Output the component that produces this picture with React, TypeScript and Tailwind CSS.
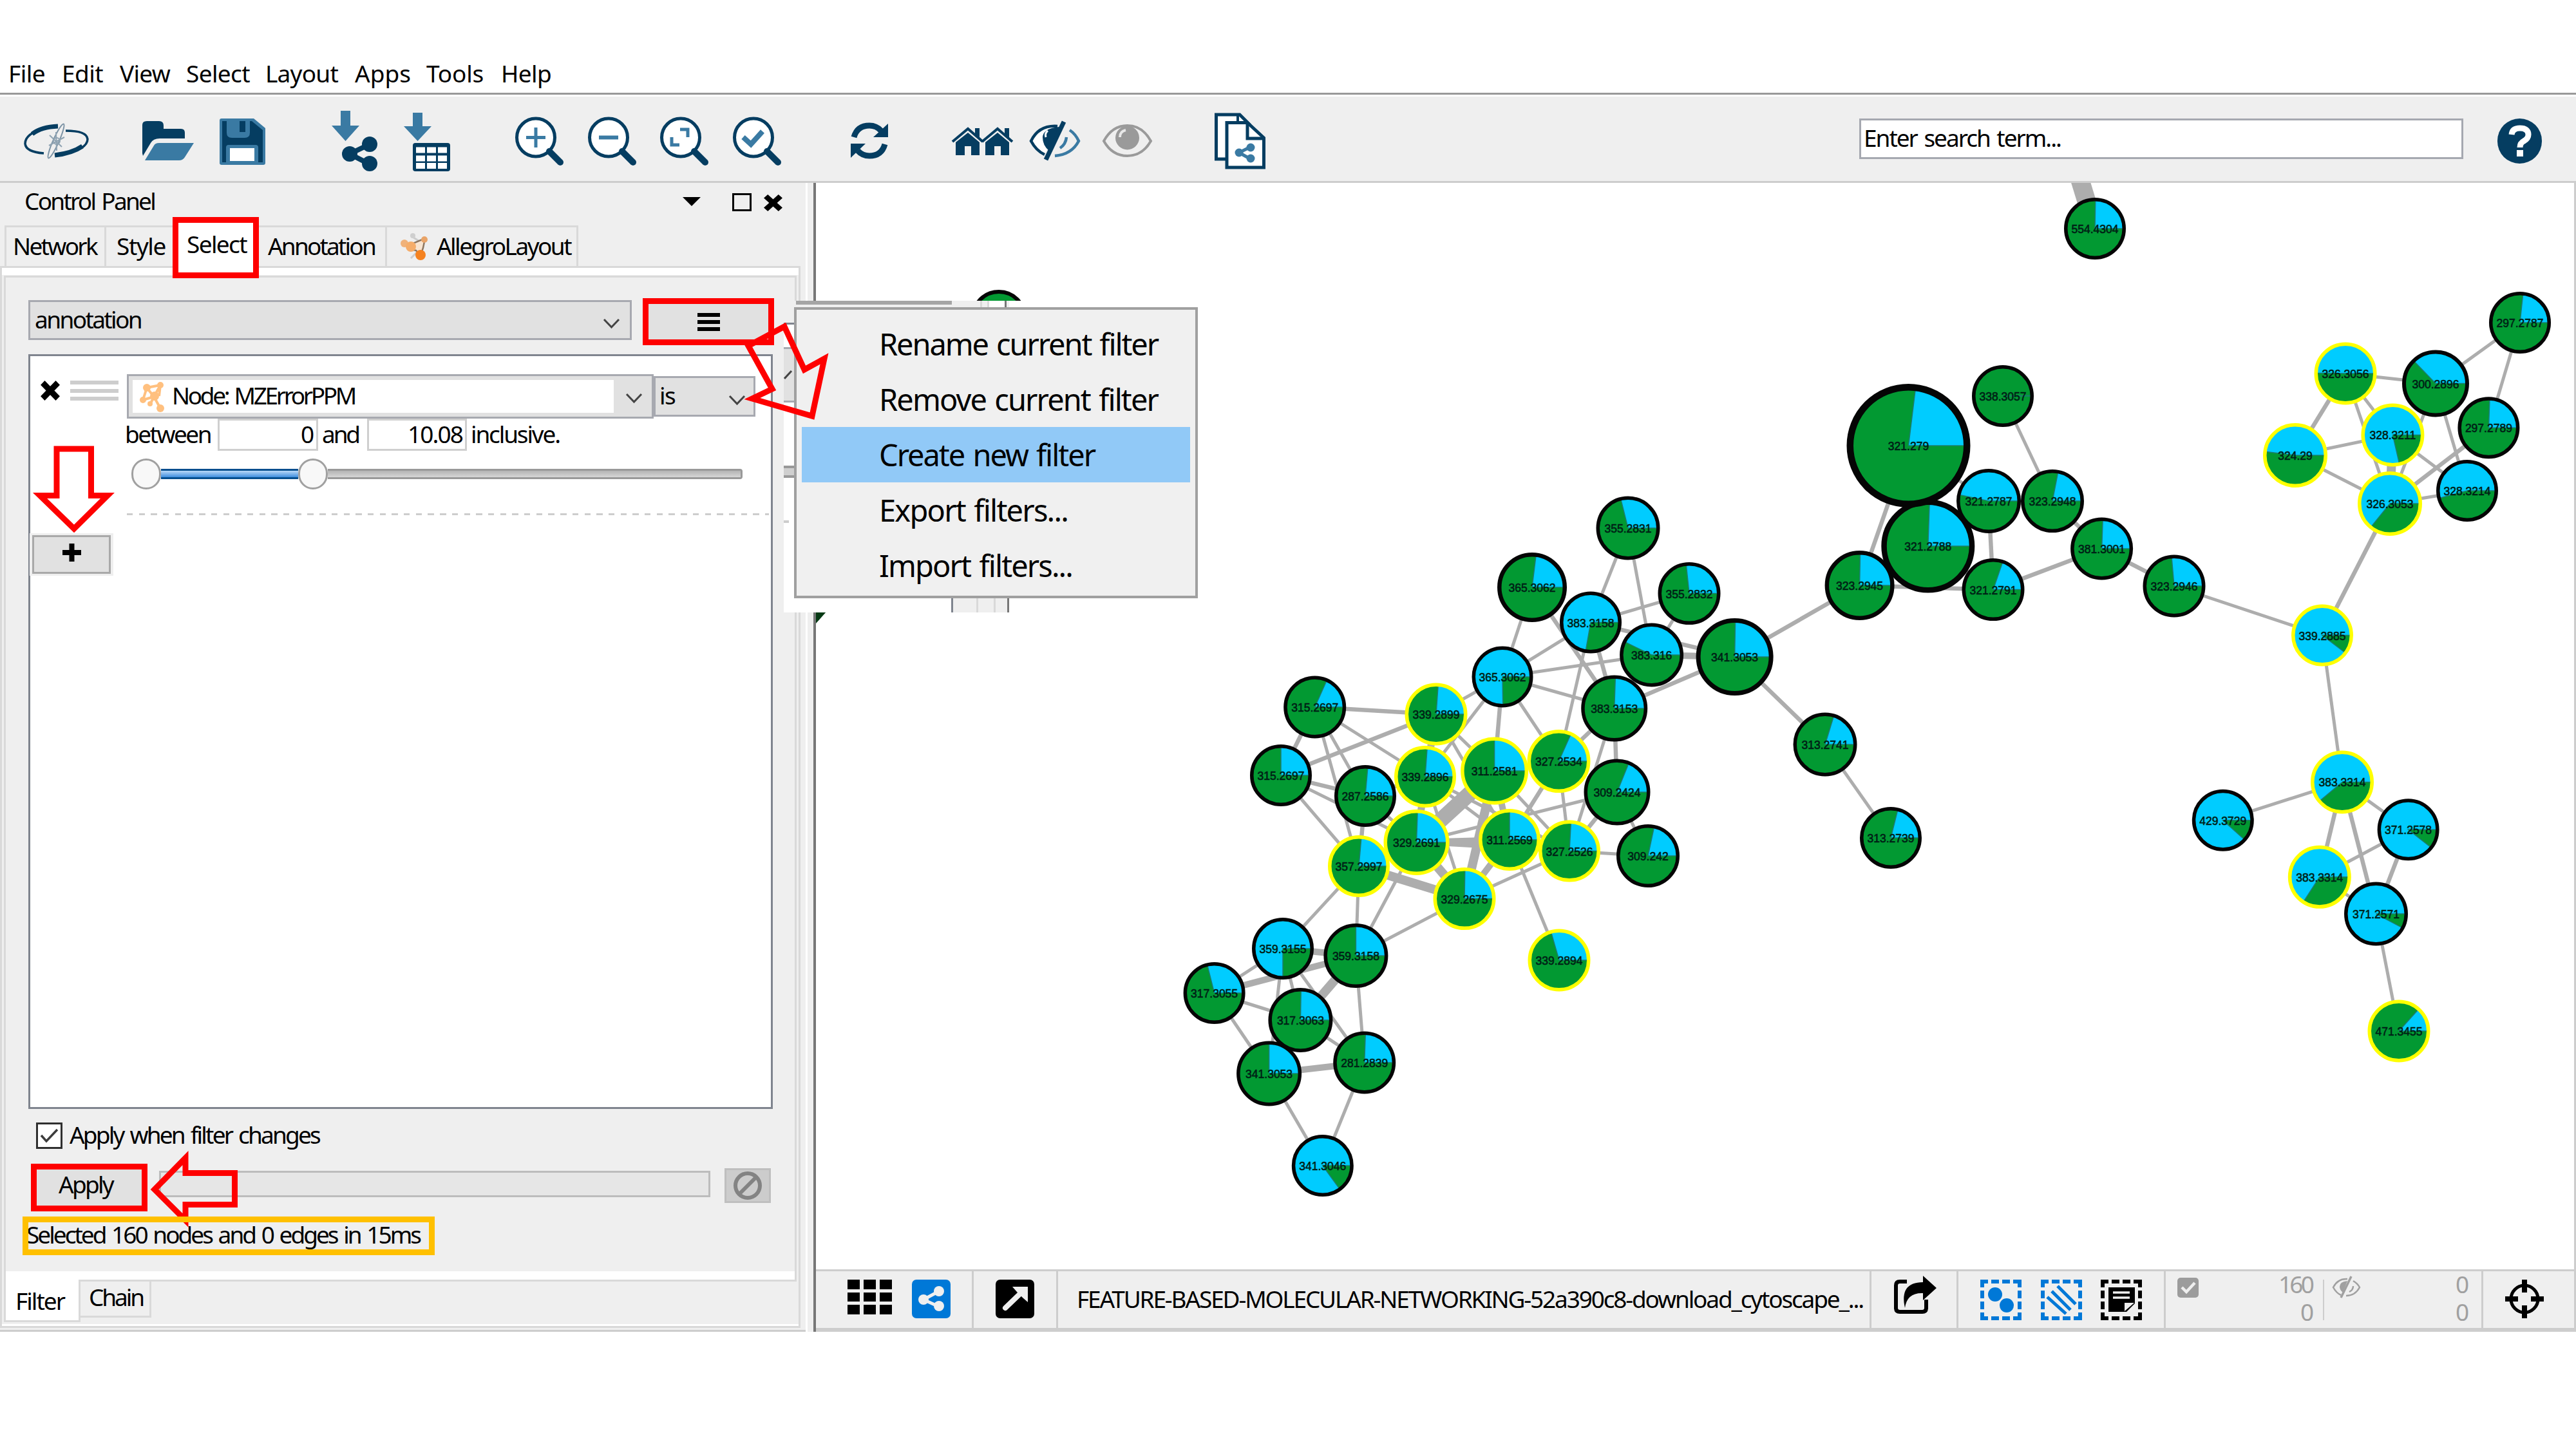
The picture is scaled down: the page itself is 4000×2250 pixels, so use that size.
import React, { useLayoutEffect, useRef, useState } from "react";

/** Single-line label whose tracking is adjusted so that it spans `w` pixels. */
function Label({ text, w, className = "", raised = true }: { text: string; w: number; className?: string; raised?: boolean }) {
  const ref = useRef<HTMLSpanElement>(null);
  const [spacing, setSpacing] = useState(0);
  useLayoutEffect(() => {
    if (!ref.current) return;
    const natural = ref.current.getBoundingClientRect().width - spacing * text.length;
    setSpacing((w - natural) / text.length);
  }, [text, w]);
  return (
    <span
      ref={ref}
      className={"inline-block shrink-0 whitespace-pre [word-spacing:3px] " + (raised ? "-translate-x-[2px] -translate-y-[2px] " : "") + className}
      style={{ letterSpacing: spacing }}
    >
      {text}
    </span>
  );
}

const NAVY = "#053d61";
const STEEL = "#3a7aa3";

/** Toolbar glyph: drawn in a window of the toolbar's own coordinate space. */
function Tool({ x, w, className = "", children }: { x: number; w: number; className?: string; children: React.ReactNode }) {
  return (
    <svg width={w} height={131} viewBox={`${x} 150 ${w} 131`} className={"shrink-0 overflow-visible " + className}>
      {children}
    </svg>
  );
}

function Lens({ className, children }: { className: string; children: React.ReactNode }) {
  return (
    <Tool x={0} w={75} className={className}>
      <circle cx="32" cy="213.500" r="29.500" fill="#fff" stroke={NAVY} strokeWidth="5" />
      <path d="M53 235 L70 252" stroke={NAVY} strokeWidth="10" strokeLinecap="round" />
      {children}
    </Tool>
  );
}

function Toolbar() {
  return (
    <div className="flex h-[134px] items-start border-b-[3px] border-[#cdcdcd] bg-[#efefef]">
      <Tool x={37} w={100} className="ml-[37px]">
        <g fill="none" stroke={NAVY}>
          <path d="M72 198 Q39 207 39 223 Q40 236 68 238" strokeWidth="3.500" />
          <path d="M50 208 Q64 197 90 196" strokeWidth="7" />
          <path d="M102 203 Q135 203 136 216 Q136 224 126 230" strokeWidth="3.500" />
          <path d="M85 241 Q112 238 128 227" strokeWidth="7" />
          <ellipse cx="87" cy="219" rx="29" ry="4.500" transform="rotate(-66 87 219)" strokeWidth="2" stroke="#7c93a5" />
          <path d="M77 210 L96 228 M76 226 L100 213 M87 205 L88 234" strokeWidth="2" stroke="#8fa3b2" />
          <circle cx="88" cy="219" r="5" strokeWidth="2" stroke="#8fa3b2" />
        </g>
      </Tool>
      <Tool x={221} w={80} className="ml-[84px]">
        <path d="M221 238 V194 Q221 188 228 188 H247 Q254 188 254 195 V200 H281 Q287 200 287 206 V215 H248 Q238 215 234 222 L222 242 Z" fill={NAVY} />
        <path d="M225 249 L239 226 Q241 222 247 222 H301 L287 244 Q284 249 278 249 Z" fill={STEEL} />
      </Tool>
      <Tool x={341} w={71} className="ml-[40px]">
        <path d="M344 184 H394 L412 199 V253 Q412 256 409 256 H344 Q341 256 341 253 V187 Q341 184 344 184 Z" fill={STEEL} />
        <path d="M345 188 H352 V206 Q352 214 360 214 H380 Q388 214 388 206 V188 L391 188 L408 202 V252 H401 V229 Q401 225 397 225 H355 Q351 225 351 229 V252 H345 Z" fill={NAVY} />
        <rect x="372" y="188" width="9" height="17" fill={NAVY} />
        <rect x="357" y="230" width="38" height="20" fill="#fff" />
      </Tool>
      <Tool x={515} w={71} className="ml-[103px]">
        <path d="M529 172 H544 V195 H558 L536.500 219 L515 195 H529 Z" fill={STEEL} />
        <path d="M543 239 L574 224 M543 239 L574 255" stroke={NAVY} strokeWidth="8" />
        <circle cx="543" cy="239" r="12" fill={NAVY} />
        <circle cx="574" cy="224" r="12" fill={NAVY} />
        <circle cx="574" cy="254" r="12" fill={NAVY} />
      </Tool>
      <Tool x={627} w={72} className="ml-[41px]">
        <path d="M641 175 H656 V196 H670 L648.500 219 L627 196 H641 Z" fill={STEEL} />
        <rect x="641" y="222" width="58" height="44" rx="4" fill={NAVY} />
        {[228.5, 241.5, 253].map((y) =>
          [646, 663, 680].map((x) => <rect key={`${x}-${y}`} x={x} y={y} width="14" height="9" fill="#fff" />)
        )}
      </Tool>
      <Lens className="ml-[101px]">
        <path d="M17 213.500 H47 M32 198 V229" stroke={STEEL} strokeWidth="5" />
      </Lens>
      <Lens className="ml-[38px]">
        <path d="M17 213.500 H47" stroke={STEEL} strokeWidth="6" />
      </Lens>
      <Lens className="ml-[37px]">
        <path d="M31 201 H43 V213 M18 213 V225 H30" stroke={STEEL} strokeWidth="5" fill="none" />
      </Lens>
      <Lens className="ml-[38px]">
        <path d="M16 213 L28 224 L46 204" stroke={STEEL} strokeWidth="8" fill="none" />
      </Lens>
      <Tool x={1321} w={58} className="ml-[108px]">
        <path d="M1326 213 Q1331 195 1350 195 Q1361 195 1368 203" stroke={NAVY} strokeWidth="9" fill="none" />
        <path d="M1379 192 V213 H1356 Z" fill={NAVY} />
        <path d="M1374 224 Q1369 242 1350 242 Q1339 242 1332 234" stroke={NAVY} strokeWidth="9" fill="none" />
        <path d="M1321 245 V223 H1344 Z" fill={NAVY} />
      </Tool>
      <Tool x={1477} w={95} className="ml-[98px]">
        {[0, 46].map((dx) => (
          <g key={dx} transform={`translate(${dx} 0)`}>
            <path d="M1479 220 L1503 200 L1526 220" stroke={NAVY} strokeWidth="4" fill="none" />
            <path d="M1514 199 H1521 V214 L1514 208 Z" fill={NAVY} />
            <path d="M1484 221 L1503 206 L1521 221 V241 H1508 V227 H1498 V241 H1484 Z" fill={NAVY} />
          </g>
        ))}
      </Tool>
      <Tool x={1599} w={78} className="ml-[27px]">
        <path d="M1642 196 Q1613 194 1601 219 Q1609 234 1622 240" stroke={NAVY} strokeWidth="4.500" fill="#fff" />
        <path d="M1645 197 Q1620 199 1619 213 Q1619 226 1629 234 Z" fill={NAVY} />
        <path d="M1627 203 Q1622 207 1624 213" stroke="#fff" strokeWidth="3" fill="none" />
        <path d="M1652 189 L1624 248" stroke={NAVY} strokeWidth="7" />
        <path d="M1661 202 Q1670 208 1675 219 Q1664 240 1638 242 M1656 213 Q1655 224 1646 230" stroke={STEEL} strokeWidth="4.500" fill="none" />
      </Tool>
      <Tool x={1712} w={77} className="ml-[35px]">
        <path d="M1714 219 Q1727 195 1750.500 195 Q1774 195 1787 219 Q1774 242 1750.500 242 Q1727 242 1714 219 Z" stroke="#9a9a9a" strokeWidth="4" fill="#efefef" />
        <circle cx="1750.500" cy="214" r="18.500" fill="#9a9a9a" />
        <path d="M1739 213 Q1739 204 1748 202" stroke="#e8e8e8" strokeWidth="4" fill="none" />
      </Tool>
      <Tool x={1886} w={79} className="ml-[97px]">
        <path d="M1888.500 178 H1925 L1940 193 V247 H1888.500 Z" fill="#fff" stroke={NAVY} strokeWidth="5" />
        <path d="M1922 178 V190" stroke={NAVY} strokeWidth="4" />
        <path d="M1905 190.500 H1937 L1962.500 214 V260 H1905 Z" fill="#fff" stroke={NAVY} strokeWidth="5" />
        <path d="M1937 191 V215 H1962" fill="none" stroke={NAVY} strokeWidth="5" />
        <path d="M1924 237 L1942 228 M1924 237 L1942 247" stroke={STEEL} strokeWidth="5" />
        <circle cx="1924" cy="237" r="6.500" fill={STEEL} />
        <circle cx="1942" cy="229" r="6.500" fill={STEEL} />
        <circle cx="1942" cy="246" r="6.500" fill={STEEL} />
      </Tool>
      <div className="mt-[34px] ml-auto flex h-[63px] w-[938px] shrink-0 items-center border-[3px] border-[#a5a8b0] bg-white pl-[6px]">
        <Label text="Enter search term..." w={306} />
      </div>
      <div className="mt-[34px] mr-[53px] ml-[53px] flex h-[70px] w-[69px] shrink-0 items-center justify-center rounded-full bg-[#053d61]">
        <svg width="36" height="50" viewBox="0 0 36 50">
          <path d="M5 15 Q6 5 18 5 Q31 5 31 15 Q31 21 24 25 Q18 28 18 35" fill="none" stroke="#fff" strokeWidth="9" />
          <rect x="13" y="39" width="10" height="10" fill="#fff" />
        </svg>
      </div>
    </div>
  );
}

function Chevron({ className = "" }: { className?: string }) {
  return (
    <svg width="27" height="18" viewBox="0 0 27 18" className={"shrink-0 " + className}>
      <path d="M2 3 L13.500 15 L25 3" fill="none" stroke="#444" strokeWidth="3" />
    </svg>
  );
}

function Cross({ w, h }: { w: number; h: number }) {
  return (
    <svg width={w} height={h} viewBox="0 0 30 28" preserveAspectRatio="none" className="shrink-0">
      <path d="M4 3 L26 25 M26 3 L4 25" stroke="#000" strokeWidth="8.500" />
    </svg>
  );
}

function PanelTabs() {
  return (
    <div className="ml-[7px] flex h-[63px] items-stretch">
      <div className="flex w-[158px] shrink-0 items-center border-x-[3px] border-t-[3px] border-[#d9d9d9] pl-[12px]">
        <Label text="Network" w={130} />
      </div>
      <div className="flex w-[103px] shrink-0 items-center border-t-[3px] border-[#d9d9d9] pl-[18px]">
        <Label text="Style" w={76} />
      </div>
      <div className="relative z-10 -mt-[13px] flex h-[95px] w-[134px] shrink-0 border-[9px] border-[#fe0000] bg-white pt-[9px] pl-[15px]">
        <Label text="Select" w={93} className="leading-[52px]" />
      </div>
      <div className="flex w-[199px] shrink-0 items-center border-t-[3px] border-r-[3px] border-[#d9d9d9] pl-[16px]">
        <Label text="Annotation" w={166} />
      </div>
      <div className="flex w-[297px] shrink-0 items-center border-t-[3px] border-r-[3px] border-[#d9d9d9] pl-[21px]">
        <svg width="44" height="44" viewBox="0 0 44 44" className="shrink-0">
          <path d="M17 6 L30 14 M30 14 L40 8 M26 30 L16 40" stroke="#ccc" strokeWidth="3" />
          <circle cx="19" cy="5" r="4" fill="#cfcfcf" />
          <path d="M4 16 L17 18 L38 9 L35 24 L31 36 L24 28 L14 26 Z" fill="#f8e4d0" stroke="#8d7660" strokeWidth="2.500" />
          <circle cx="6" cy="17" r="6" fill="#f0b27a" />
          <circle cx="16" cy="22" r="8" fill="#f5ad6a" />
          <circle cx="37" cy="11" r="5" fill="#e9a468" />
          <circle cx="31" cy="35" r="8" fill="#f58220" />
        </svg>
        <Label text="AllegroLayout" w={208} className="ml-[14px]" />
      </div>
    </div>
  );
}

function FilterRow() {
  return (
    <div className="flex flex-col">
      <div className="mt-[28px] flex h-[69px] items-start">
        <div className="mt-[10px] ml-[15px]">
          <Cross w={32} h={31} />
        </div>
        <div className="mt-[10px] ml-[15px] flex h-[31px] w-[75px] shrink-0 flex-col justify-between">
          <div className="h-[6px] bg-[#cdcdcd]" />
          <div className="h-[6px] bg-[#cdcdcd]" />
          <div className="h-[6px] bg-[#cdcdcd]" />
        </div>
        <div className="ml-[13px] flex h-[69px] w-[818px] shrink-0 items-center border-[3px] border-[#a7a9b0] bg-[#e1e1e1] pl-[6px]">
          <div className="flex h-[51px] w-[747px] shrink-0 items-center bg-white pl-[11px]">
            <svg width="39" height="48" viewBox="0 0 39 48" className="shrink-0">
              <g stroke="#ffc07f" strokeWidth="4">
                <path d="M11 10 L32 6 M11 10 L5 29 M32 6 L22 24 M5 29 L22 24 M11 10 L22 24 M22 24 L32 42 M32 6 L30 23 M22 24 L16 36" />
              </g>
              <g fill="#ffc07f">
                <circle cx="11" cy="10" r="6" />
                <circle cx="32" cy="6" r="5" />
                <circle cx="5" cy="29" r="5" />
                <circle cx="23" cy="23" r="7" />
                <circle cx="32" cy="42" r="6" />
                <circle cx="16" cy="35" r="4" />
              </g>
            </svg>
            <Label text="Node: MZErrorPPM" w={284} className="ml-[13px]" />
          </div>
          <Chevron className="mt-[4px] ml-[18px]" />
        </div>
        <div className="mt-[3px] flex h-[63px] w-[158px] shrink-0 items-center border-[3px] border-[#a7a9b0] bg-[#e1e1e1] pl-[8px]">
          <Label text="is" w={24} />
          <Chevron className="mt-[10px] ml-[81px]" />
        </div>
      </div>
      <div className="ml-[149px] flex h-[50px] items-center">
        <Label text="between" w={133} />
        <div className="ml-[9px] flex h-[50px] w-[156px] shrink-0 items-center justify-end border-[3px] border-[#cfcfcf] pr-[2px]">
          <Label text="0" w={20} />
        </div>
        <Label text="and" w={57} className="ml-[8px]" />
        <div className="ml-[11px] flex h-[50px] w-[155px] shrink-0 items-center justify-end border-[3px] border-[#cfcfcf] pr-[2px]">
          <Label text="10.08" w={85} />
        </div>
        <Label text="inclusive." w={138} className="ml-[8px]" />
      </div>
      <div className="mt-[12px] ml-[157px] flex h-[48px] items-center">
        <div className="h-[48px] w-[46px] shrink-0 rounded-full border-[3px] border-[#a0a0a0] bg-[#f8f8f8]" />
        <div className="h-[16px] w-[213px] shrink-0 border-y-[3px] border-[#064f8f] bg-linear-to-b from-[#b9d9f7] to-[#3b8ede]" />
        <div className="h-[48px] w-[46px] shrink-0 rounded-full border-[3px] border-[#a0a0a0] bg-[#f8f8f8]" />
        <div className="h-[16px] w-[644px] shrink-0 rounded-r-[4px] border-y-[3px] border-r-[3px] border-[#999] bg-linear-to-b from-[#b4b4b4] to-[#d6d6d6]" />
      </div>
      <div className="mt-[37px] ml-[150px] h-[3px] w-[997px] bg-[repeating-linear-gradient(90deg,#cdcdcd_0px,#cdcdcd_9.400px,transparent_9.400px,transparent_18.700px)]" />
      <div className="mt-[28px] -ml-px flex h-[66px] w-[130px] items-center justify-center bg-[#efefef]">
        <div className="flex h-[60px] w-[122px] items-center justify-center border-[3px] border-[#a9a9a9] bg-[#e1e1e1]">
          <svg width="29" height="28" viewBox="0 0 29 28" className="-mt-[6px]">
            <path d="M0 14 H29 M14.500 0 V28" stroke="#000" strokeWidth="8" />
          </svg>
        </div>
      </div>
    </div>
  );
}

function ControlPanel() {
  return (
    <div className="flex h-[1781px] w-[1251px] shrink-0 flex-col bg-[#efefef]">
      <div className="flex h-[66px] shrink-0 items-center pr-[35px] pl-[40px]">
        <Label text="Control Panel" w={202} className="-mt-[8px]" />
        <svg width="28" height="14" viewBox="0 0 28 14" className="-mt-[8px] ml-auto">
          <path d="M0 0 H28 L14 14 Z" fill="#000" />
        </svg>
        <div className="-mt-[6px] ml-[49px] h-[28px] w-[30px] border-[3px] border-black" />
        <div className="-mt-[4px] ml-[18px]">
          <Cross w={31} h={26} />
        </div>
      </div>
      <PanelTabs />
      <div className="flex h-[1649px] w-[1243px] flex-col border-[3px] border-[#d9d9d9] bg-[#efefef]">
        <div className="h-[11px] shrink-0 bg-white" />
        <div className="mt-px ml-[3px] flex h-[1562px] w-[1231px] shrink-0 flex-col border-x-[3px] border-y-[3px] border-[#d9d9d9] pl-[35px]">
          <div className="mt-[32px] flex h-[73px] shrink-0 items-center">
            <div className="-mt-[5px] flex h-[62px] w-[937px] shrink-0 items-center border-[3px] border-[#a7a9b0] bg-[#e1e1e1] pr-[15px] pl-[9px]">
              <Label text="annotation" w={165} />
              <Chevron className="mt-[10px] ml-auto" />
            </div>
            <div className="ml-[17px] flex h-[73px] w-[204px] shrink-0 flex-col items-center justify-center gap-[5px] border-[9px] border-[#fe0000] bg-[#e1e1e1]">
              <div className="h-[6px] w-[35px] bg-black" />
              <div className="h-[6px] w-[35px] bg-black" />
              <div className="h-[6px] w-[35px] bg-black" />
            </div>
          </div>
          <div className="mt-[14px] h-[1172px] w-[1156px] shrink-0 border-[3px] border-[#7f848e] bg-white">
            <FilterRow />
          </div>
          <div className="mt-[21px] ml-[12px] flex h-[41px] shrink-0 items-center">
            <div className="flex h-[41px] w-[41px] shrink-0 items-center justify-center border-[3px] border-[#2f2f2f] bg-white">
              <svg width="31" height="29" viewBox="0 0 31 29">
                <path d="M3 14 L11 23 L28 5" fill="none" stroke="#3c3c3c" strokeWidth="3.500" />
              </svg>
            </div>
            <Label text="Apply when filter changes" w={388} className="ml-[13px]" />
          </div>
          <div className="mt-[23px] ml-[4px] flex h-[74px] shrink-0 items-center">
            <div className="flex h-[74px] w-[181px] shrink-0 items-center border-[9px] border-[#fe0000] bg-[#e1e1e1] pl-[36px]">
              <Label text="Apply" w={84} className="-mt-[8px]" />
            </div>
            <div className="-mt-[12px] ml-[18px] h-[41px] w-[856px] shrink-0 border-[3px] border-[#bcbcbc] bg-[#e6e6e6]" />
            <div className="-mt-[6px] ml-[22px] flex h-[54px] w-[72px] shrink-0 items-center justify-center border-[3px] border-[#bfbfbf] bg-[#cccccc]">
              <svg width="46" height="46" viewBox="0 0 46 46">
                <circle cx="23" cy="23" r="19" fill="none" stroke="#838383" strokeWidth="6" />
                <path d="M36 10 L10 36" stroke="#838383" strokeWidth="6" />
              </svg>
            </div>
          </div>
          <div className="mt-[7px] -ml-[9px] flex h-[60px] w-[640px] shrink-0 items-center">
            <Label text="Selected 160 nodes and 0 edges in 15ms" w={611} className="ml-[8px]" />
          </div>
          <div className="mt-auto -ml-[35px] h-[13px] shrink-0 bg-white" />
        </div>
        <div className="-mt-[3px] ml-[3px] flex h-[66px] shrink-0 items-start">
          <div className="flex h-[66px] w-[119px] shrink-0 items-center border-x-[3px] border-b-[3px] border-[#d9d9d9] bg-white pl-[17px]">
            <Label text="Filter" w={76} className="mt-[5px]" />
          </div>
          <div className="flex h-[59px] w-[110px] shrink-0 items-center border-y-[3px] border-r-[3px] border-[#d9d9d9] pl-[15px]">
            <Label text="Chain" w={84} className="-mt-[2px]" />
          </div>
        </div>
        <div className="mt-auto h-[3px] shrink-0 bg-white" />
      </div>
    </div>
  );
}

type GraphNode = { id: string; label: string; x: number; y: number; r: number; sweep: number; selected: boolean; ring: number };
const n = (id: string, label: string, x: number, y: number, r: number, sweep: number, selected = false, ring = 5.5): GraphNode => ({
  id,
  label,
  x,
  y,
  r,
  sweep,
  selected,
  ring,
});

/** id, label, centre, radius, cyan sweep in degrees, selected, ring width */
const NODES: GraphNode[] = [
  n("A", "355.2831", 2528, 820, 49.5, 104),
  n("B", "365.3062", 2379, 912, 54, 83, false, 6.5),
  n("D", "355.2832", 2623, 921.6, 48.5, 96),
  n("F", "341.3053", 2693.6, 1020, 60, 89, false, 7),
  n("C", "383.3158", 2470, 966.5, 48, 260),
  n("E", "383.316", 2564.6, 1017, 49.5, 154),
  n("G", "365.3062", 2333, 1051, 47.5, 271),
  n("H", "383.3153", 2506.7, 1100, 51.5, 88),
  n("I", "315.2697", 2041.7, 1098, 48.5, 66),
  n("K", "315.2697", 1989, 1204, 48, 90),
  n("L", "287.2586", 2120, 1236, 48, 85),
  n("J", "339.2899", 2230, 1109, 48.5, 86, true),
  n("M", "339.2896", 2213, 1206, 48, 86, true),
  n("N", "311.2581", 2320.6, 1197, 52.5, 90, true),
  n("P", "309.2424", 2511, 1230, 51.5, 68),
  n("O", "327.2534", 2420.5, 1182, 49, 66, true),
  n("Q", "309.242", 2559, 1329, 49, 78),
  n("T", "329.2691", 2199.5, 1308, 51, 88, true),
  n("R", "327.2526", 2437, 1321.6, 48, 87, true),
  n("S", "311.2569", 2344, 1304, 48, 90, true),
  n("U", "357.2997", 2110, 1345, 48, 85, true),
  n("V", "329.2675", 2274, 1395.6, 48.5, 89, true),
  n("W", "359.3155", 1992, 1473, 48, 270),
  n("X", "359.3158", 2105.4, 1484, 50, 90),
  n("Y", "339.2894", 2421, 1491, 48.5, 106, true),
  n("Z", "317.3055", 1885.6, 1542, 48, 104),
  n("b", "341.3053", 1970.6, 1667, 50.5, 90),
  n("a", "317.3063", 2019.4, 1584, 50, 89),
  n("c", "281.2839", 2118.7, 1650, 48.5, 88),
  n("d", "341.3046", 2053.8, 1810, 48, 306),
  n("e", "338.3057", 3110, 615, 48, 1),
  n("h", "321.2787", 3088, 778, 50, 168),
  n("i", "323.2948", 3187, 778, 49, 79),
  n("k", "321.2791", 3095, 915.6, 48.5, 71),
  n("j", "323.2945", 2887.6, 909, 54, 89, false, 6.5),
  n("g", "321.2788", 2993.8, 848, 72.5, 88, false, 8.5),
  n("f", "321.279", 2963.5, 692, 96, 83, false, 10.5),
  n("l", "381.3001", 3263.6, 852, 48.5, 88),
  n("m", "323.2946", 3376, 910, 48.5, 95),
  n("o", "313.2741", 2834, 1156, 49.5, 73),
  n("p", "313.2739", 2936, 1301, 48, 76),
  n("q", "429.3729", 3451.8, 1273.7, 48, 318),
  n("r", "383.3314", 3637, 1214.4, 49, 220, true),
  n("s", "371.2578", 3739.6, 1288.3, 48, 322),
  n("t", "383.3314", 3601.8, 1361.8, 49, 237, true),
  n("u", "371.2571", 3689.5, 1419, 49.5, 332),
  n("v", "471.3455", 3725, 1601, 48.5, 48, true),
  n("w", "339.2885", 3606, 986.6, 48, 323, true),
  n("1", "328.3214", 3831, 762, 48, 195),
  n("3", "324.29", 3564, 707, 50, 173, true),
  n("4", "328.3211", 3715.4, 675.4, 49, 283, true),
  n("2", "326.3053", 3711, 782, 50, 231, true),
  n("5", "326.3056", 3642, 580, 48.5, 179, true),
  n("6", "300.2896", 3782, 595.5, 52, 134, false, 6),
  n("7", "297.2789", 3864.4, 664.3, 48, 88),
  n("8", "297.2787", 3913, 501, 48, 84),
  n("9", "554.4304", 3253, 355, 48, 89),
];

/** Pairs of node ids, grouped by line width. */
const EDGES: [number, string][] = [
  [5, "AC AE BG CD DE CG EG GH GJ GM GO CO HR OR PT PQ RQ RV SY VX TX UX UW IM IL IU KU KT LT ZW Zb Za aW bW cW cX ac bd cd JN JS MS MV NR NO MR fh ei op wm wr rq uv 56 54 52 34 32 62 61 68 78 41 21 rs ts tu"],
  [6.5, "BH CH CF IJ KJ KL IK HO OS PR FH Fo jF fj kj hk kl lm w2 rt ru su 53 72 gk il GN LU LM HP TR"],
  [10, "EF WX XZ bc MT JM ST SV NS JT"],
  [14, "aX UV NV TV 42 ab"],
  [24, "NT"],
];

function sector(x: number, y: number, r: number, a: number) {
  const rad = (a * Math.PI) / 180;
  const ex = x + r * Math.cos(rad);
  const ey = y - r * Math.sin(rad);
  return `M${x} ${y} L${x + r} ${y} A${r} ${r} 0 ${a > 180 ? 1 : 0} 0 ${ex} ${ey} Z`;
}

function NetworkView() {
  const byId = Object.fromEntries(NODES.map((v) => [v.id, v]));
  return (
    <svg width="2730" height="1687" viewBox="1267 284 2730 1687" className="block shrink-0 bg-white">
      <path d="M3227 270 L3250 345" stroke="#adadad" strokeWidth="29" />
      {EDGES.map(([w, list]) =>
        list.split(" ").map((p) => (
          <line key={p} x1={byId[p[0]].x} y1={byId[p[0]].y} x2={byId[p[1]].x} y2={byId[p[1]].y} stroke="#adadad" strokeWidth={w} />
        ))
      )}
      {NODES.map((v) => {
        const ri = v.r - v.ring / 2;
        return (
          <g key={v.id}>
            <circle cx={v.x} cy={v.y} r={ri} fill="#029932" />
            <path d={sector(v.x, v.y, ri, v.sweep)} fill="#00ccff" stroke="#1b7d70" strokeWidth="1.500" />
            <circle cx={v.x} cy={v.y} r={ri} fill="none" stroke={v.selected ? "#ffff00" : "#050505"} strokeWidth={v.ring} />
            <text
              x={v.x}
              y={v.y + 7}
              textAnchor="middle"
              fontSize="17.500"
              fill="#001f16"
              stroke="#001f16"
              strokeWidth="0.600"
              className="font-['Liberation_Sans',sans-serif]"
            >
              {v.label}
            </text>
          </g>
        );
      })}
      <circle cx="1551" cy="494" r="41" fill="#029932" stroke="#050505" strokeWidth="6" />
      <path d="M1267 950 H1283 L1267 968 Z" fill="#063a14" />
    </svg>
  );
}

function Marquee({ color, className = "", children }: { color: string; className?: string; children: React.ReactNode }) {
  return (
    <svg width="64" height="63" viewBox="0 0 64 63" className={"shrink-0 " + className}>
      <path
        d="M0 3 H12 M17 3 H29 M34 3 H46 M51 3 H64 M0 60 H12 M17 60 H29 M34 60 H46 M51 60 H64 M3 0 V12 M3 17 V29 M3 34 V46 M3 51 V63 M61 0 V12 M61 17 V29 M61 34 V46 M61 51 V63"
        stroke={color}
        strokeWidth="6"
      />
      {children}
    </svg>
  );
}

function StatusBar() {
  return (
    <div className="flex h-[97px] w-[2730px] shrink-0 border-t-[3px] border-b-[6px] border-[#cdcdcd] bg-[#efefef]">
      <div className="flex w-[245px] shrink-0 items-start border-r-[3px] border-[#cdcdcd] pt-[13px] pl-[49px]">
        <div className="grid h-[54px] w-[69px] shrink-0 grid-cols-3 gap-x-[6px] gap-y-[5px]">
          {[0, 1, 2, 3, 4, 5, 6, 7, 8].map((i) => (
            <div key={i} className="bg-black" />
          ))}
        </div>
        <svg width="60" height="60" viewBox="0 0 60 60" className="ml-[31px] shrink-0">
          <rect width="60" height="60" rx="7" fill="#0078d7" />
          <path d="M18 31 L42 18 M18 31 L42 42" stroke="#efefef" strokeWidth="5" />
          <circle cx="18" cy="31" r="8" fill="#efefef" />
          <circle cx="42" cy="18" r="8" fill="#efefef" />
          <circle cx="42" cy="41" r="8" fill="#efefef" />
        </svg>
      </div>
      <div className="flex w-[131px] shrink-0 items-start border-r-[3px] border-[#cdcdcd] pt-[13px] pl-[34px]">
        <svg width="60" height="60" viewBox="0 0 60 60">
          <rect width="60" height="60" rx="7" fill="#000" />
          <path d="M15 44 L40 20" stroke="#efefef" strokeWidth="8" strokeLinecap="round" />
          <path d="M26 11 H50 V35 L42 28 L33 19 Z" fill="#efefef" />
        </svg>
      </div>
      <div className="flex w-[1263px] shrink-0 items-center border-r-[3px] border-[#cdcdcd] pl-[31px]">
        <Label text="FEATURE-BASED-MOLECULAR-NETWORKING-52a390c8-download_cytoscape_..." w={1221} />
      </div>
      <div className="flex w-[135px] shrink-0 items-start border-r-[3px] border-[#cdcdcd] pt-[7px] pl-[35px]">
        <svg width="66" height="60" viewBox="0 0 66 60">
          <path d="M20 9 H9 Q3 9 3 15 V50 Q3 56 9 56 H44 Q50 56 50 50 V37" fill="none" stroke="#000" strokeWidth="6" />
          <path d="M17 50 Q8 10 45 10 V0 L66 19 L45 38 V27 Q20 26 17 50 Z" fill="#000" />
        </svg>
      </div>
      <div className="flex w-[322px] shrink-0 items-start border-r-[3px] border-[#cdcdcd] pt-[13px] pl-[34px]">
        <Marquee color="#0078d7">
          <circle cx="23" cy="23" r="11" fill="#0078d7" />
          <circle cx="41" cy="40" r="11" fill="#0078d7" />
        </Marquee>
        <Marquee color="#0078d7" className="ml-[30px]">
          <path d="M26 10 L54 38 M17 18 L46 47 M10 27 L39 53" stroke="#0078d7" strokeWidth="5" />
        </Marquee>
        <Marquee color="#000" className="ml-[29px]">
          <path d="M12 12 H53 V37 L40 50 H12 Z" fill="#000" />
          <path d="M19 20 H45 M19 28 H45" stroke="#efefef" strokeWidth="3.500" />
          <path d="M37 49 V36 H52 Z" fill="#efefef" />
        </Marquee>
      </div>
      <div className="flex w-[493px] shrink-0 items-start border-r-[3px] border-[#cdcdcd] pl-[18px] text-[#a0a0a0]">
        <svg width="33" height="31" viewBox="0 0 33 31" className="mt-[10px] shrink-0">
          <rect width="33" height="31" rx="5" fill="#9c9c9c" />
          <path d="M7 15 L14 22 L27 8" fill="none" stroke="#efefef" strokeWidth="4.500" />
        </svg>
        <div className="flex w-[178px] shrink-0 flex-col items-end">
          <Label text="160" w={52} className="leading-[43px]" />
          <Label text="0" w={18} className="leading-[43px]" />
        </div>
        <div className="mt-[13px] ml-[15px] h-[63px] w-[2px] shrink-0 bg-[#cdcdcd]" />
        <svg width="45" height="35" viewBox="0 0 45 35" className="mt-[7px] ml-[12px] shrink-0">
          <path d="M24 5 Q9 4 2 18 Q7 27 14 30 M33 8 Q40 12 43 18 Q36 31 22 31 M33 16 Q33 22 27 25" fill="none" stroke="#a0a0a0" strokeWidth="2.500" />
          <path d="M24 8 Q12 9 12 17 Q12 22 17 26 Z" fill="#a0a0a0" />
          <path d="M30 1 L14 34" stroke="#a0a0a0" strokeWidth="3.500" />
        </svg>
        <div className="flex w-[167px] shrink-0 flex-col items-end">
          <Label text="0" w={18} className="leading-[43px]" />
          <Label text="0" w={18} className="leading-[43px]" />
        </div>
      </div>
      <div className="flex items-start pt-[13px] pl-[34px]">
        <svg width="60" height="60" viewBox="0 0 60 60">
          <circle cx="30" cy="30" r="21" fill="none" stroke="#000" strokeWidth="5" />
          <path d="M30 0 V20 M30 40 V60 M0 30 H20 M40 30 H60" stroke="#000" strokeWidth="8" />
        </svg>
      </div>
    </div>
  );
}

const MENU: [string, number][] = [
  ["Rename current filter", 433],
  ["Remove current filter", 433],
  ["Create new filter", 335],
  ["Export filters...", 293],
  ["Import filters...", 300],
];

function FilterMenu() {
  return (
    <div className="absolute top-[477px] left-[1233px] h-[452px] w-[627px] border-[4px] border-[#a0a0a0] bg-[#f0f0f0] px-[8px] pt-[10px] text-[47px]">
      {MENU.map(([text, w], i) => (
        <div key={text} className={"flex h-[86px] items-center pl-[120px] " + (i === 2 ? "bg-[#91c9f7]" : "")}>
          <Label text={text} w={w} raised={false} />
        </div>
      ))}
    </div>
  );
}

/** Sliver of the window that shows round the open popup. */
function PopupBackdrop() {
  return (
    <div className="absolute top-[467px] left-[1217px] flex h-[484px] w-[643px] flex-col overflow-hidden bg-white">
      <div className="flex h-[10px] w-[350px] shrink-0 bg-[#efefef]">
        <div className="ml-[19px] h-[6px] w-[242px] bg-[#a5a5a5]" />
        <div className="ml-[44px] w-[3px] bg-[#d9d9d9]" />
        <div className="ml-[8px] w-[3px] bg-[#d9d9d9]" />
        <div className="w-[24px] bg-white" />
        <div className="w-[3px] bg-[#777]" />
      </div>
      <div className="h-[24px] shrink-0 bg-[#efefef]" />
      <div className="h-[3px] shrink-0 bg-[#7f848e]" />
      <div className="mt-[35px] h-[86px] w-[20px] shrink-0 border-y-[3px] border-[#a7a9b0] bg-[#e1e1e1] pt-[32px]">
        <svg width="16" height="16" viewBox="0 0 16 16">
          <path d="M1 14 L12 2" stroke="#444" strokeWidth="3" />
        </svg>
      </div>
      <div className="mt-[98px] h-[19px] w-[20px] shrink-0 border-y-[4px] border-[#999] bg-[#cfcfcf]" />
      <div className="mt-[66px] h-[4px] w-[8px] shrink-0 bg-[#cdcdcd]" />
      <div className="mt-auto flex h-[24px] w-[350px] shrink-0 justify-end">
        <div className="w-[87px] border-l-[3px] border-[#7f848e] bg-[#efefef] pl-[36px]">
          <div className="h-full w-[30px] border-x-[3px] border-[#d9d9d9]" />
        </div>
        <div className="w-[3px] bg-[#777]" />
      </div>
    </div>
  );
}

function Callouts() {
  return (
    <>
      <svg width="1310" height="1500" viewBox="0 450 1310 1500" className="pointer-events-none absolute top-[450px] left-0">
        <g fill="none" stroke="#fe0000" strokeWidth="9">
          <path d="M88 697 H141.500 V769.500 H167 L115 821 L62 769.500 H88 Z" />
          <path d="M1218 507 L1249 574 L1280 557 L1261 646 L1168 619 L1199 604 L1162 537 Z" />
          <path d="M240 1847 L288 1798 V1821.500 H364.500 V1870.500 H288 V1895 Z" />
        </g>
      </svg>
      <div className="pointer-events-none absolute top-[1889px] left-[35px] h-[60px] w-[640px] border-[9px] border-[#ffc000]" />
    </>
  );
}

const MENUBAR: [string, number, string][] = [
  ["File", 57, "ml-[13px]"],
  ["Edit", 64, "ml-[26px]"],
  ["View", 78, "ml-[26px]"],
  ["Select", 99, "ml-[25px]"],
  ["Layout", 113, "ml-[24px]"],
  ["Apps", 87, "ml-[26px]"],
  ["Tools", 89, "ml-[24px]"],
  ["Help", 78, "ml-[27px]"],
];

export default function App() {
  return (
    <div className="relative h-[2250px] w-[4000px] overflow-hidden bg-white font-['Noto_Sans','Open_Sans',sans-serif] text-[37px] leading-none text-black">
      <div className="flex h-[144px] items-end pb-[12px]">
        {MENUBAR.map(([text, w, gap]) => (
          <Label key={text} text={text} w={w} raised={false} className={"leading-[36px] " + gap} />
        ))}
      </div>
      <div className="mb-[3px] h-[3px] bg-[#999999]" />
      <Toolbar />
      <div className="flex h-[1784px]">
        <div className="h-[1784px] w-[1251px] shrink-0 border-b-[3px] border-[#cdcdcd]">
          <ControlPanel />
        </div>
        <div className="w-[3px] shrink-0 bg-white" />
        <div className="w-[9px] shrink-0 bg-[#efefef]" />
        <div className="w-[4px] shrink-0 bg-[#777777]" />
        <div className="flex w-[2730px] shrink-0 flex-col">
          <NetworkView />
          <StatusBar />
        </div>
        <div className="w-[3px] shrink-0 bg-[#cdcdcd]" />
      </div>
      <PopupBackdrop />
      <FilterMenu />
      <Callouts />
    </div>
  );
}
